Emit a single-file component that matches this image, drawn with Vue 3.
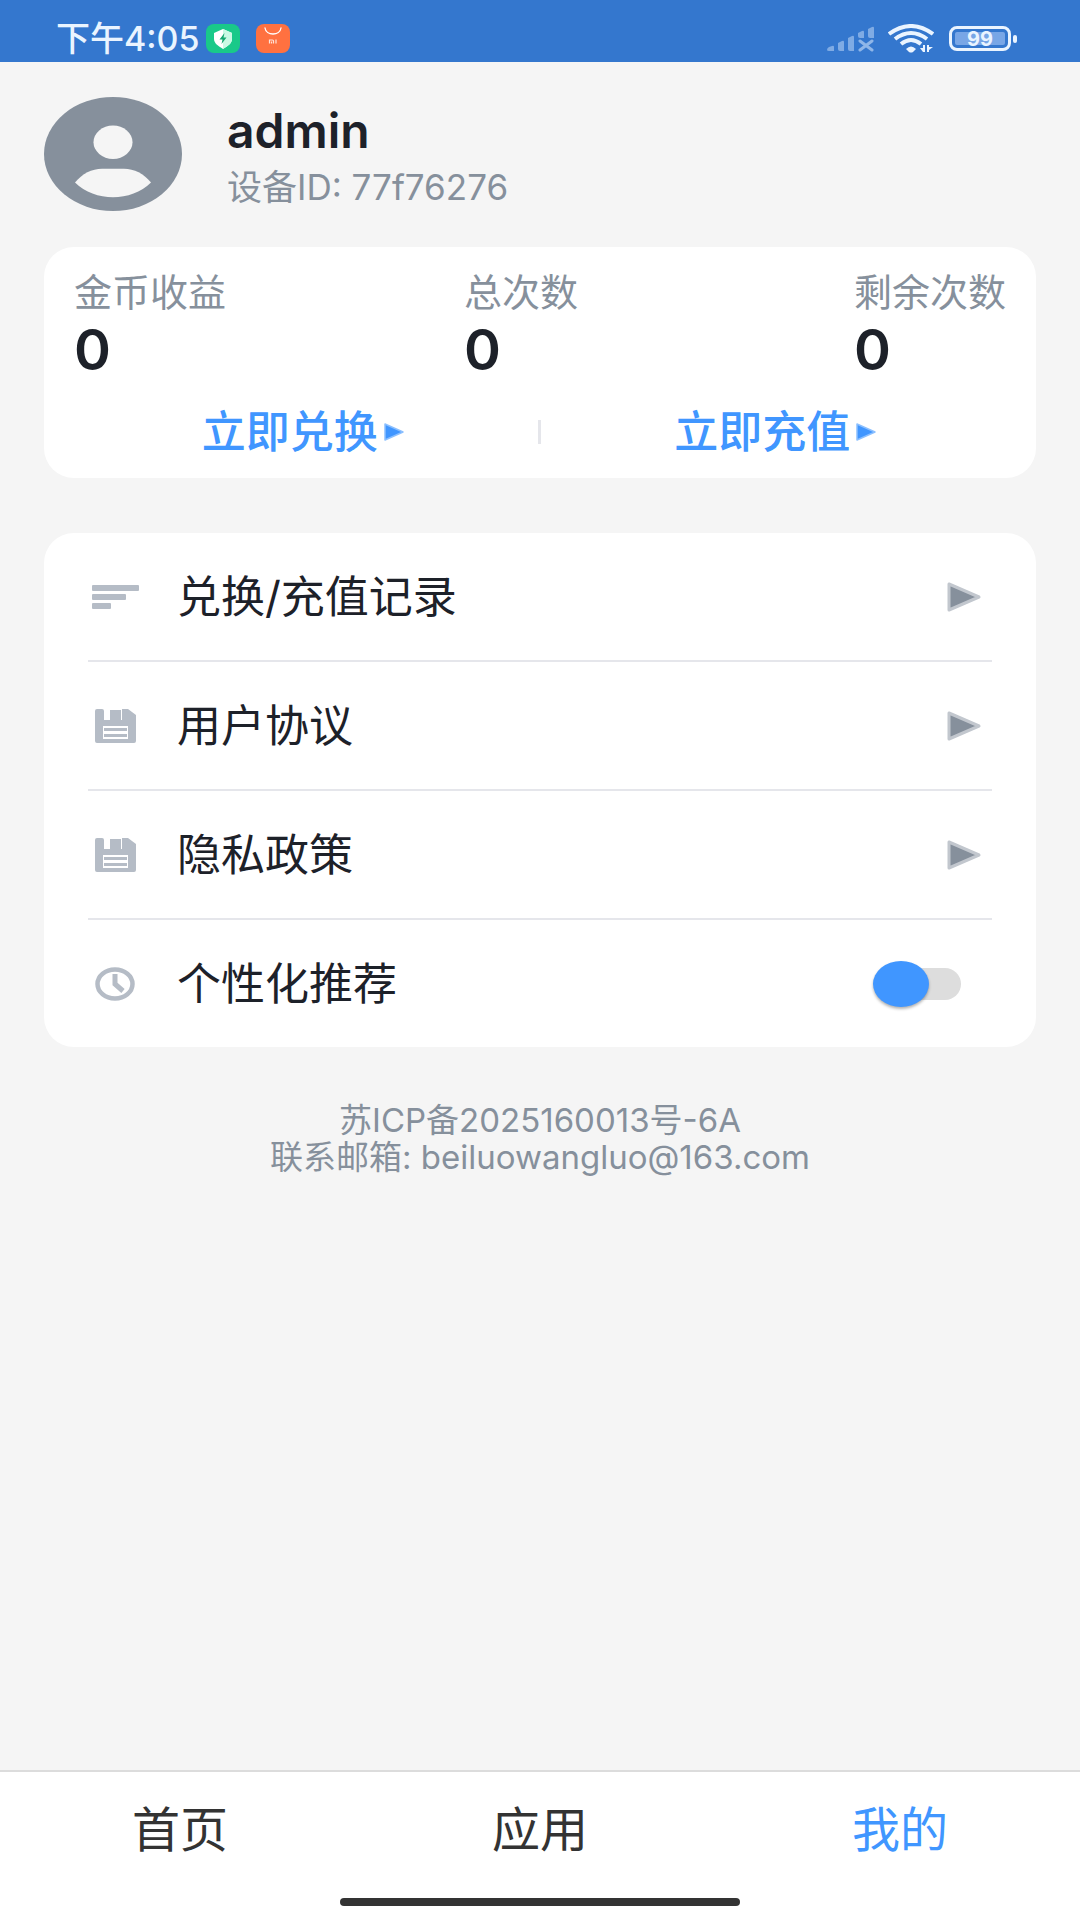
<template>
  <div class="page">
    <header class="status-bar">
      <div class="status-left">
        <span class="status-time">下午4:05</span>
        <svg class="app-icon" viewBox="0 0 34 29" preserveAspectRatio="none">
          <rect width="34" height="29" rx="8" fill="#19c989" />
          <path d="M17 5 L26 9 V15 C26 19 22 22 17 25 C12 22 8 19 8 15 V9 Z" fill="#fff" />
          <path d="M17 5 L26 9 V15 C26 19 22 22 17 25 Z" fill="#c9f9e4" />
          <path d="M18.5 9 L13.5 15.5 H16.5 L15.5 20 L20.5 13.5 H17.5 Z" fill="#14a870" />
        </svg>
        <svg class="app-icon" viewBox="0 0 34 29" preserveAspectRatio="none">
          <rect width="34" height="29" rx="8" fill="#ff7140" />
          <path d="M9 4 C10 12 24 12 25 4" fill="none" stroke="#fff" stroke-width="1.3" stroke-linecap="round" />
          <path d="M13.5 19.5 V16 H16.5 Q17.5 16 17.5 17 V19.5 M15.5 17.5 V19.5 M20 15.5 V19.5" fill="none" stroke="#ffe3d8" stroke-width="1.2" />
        </svg>
      </div>
      <div class="status-right">
        <svg class="signal-icon" viewBox="0 0 48 26">
          <g fill="#7fabe4">
            <path d="M0 24 Q0 22 2 21 L5 20 Q7 19 7 21 V25 H2 Q0 25 0 24 Z" />
            <path d="M11 17 L15 15 Q17 14 17 16 V25 H13 Q11 25 11 23 Z" />
            <path d="M21 12 L25 10 Q27 9 27 11 V25 H23 Q21 25 21 23 Z" />
            <path d="M31 7 L35 5 Q37 4 37 6 V12 H33 Q31 12 31 10 Z" />
            <path d="M41 3 L45 1 Q47 0 47 2 V12 H43 Q41 12 41 10 Z" />
          </g>
          <path d="M33 15 L45 24 M45 15 L33 24" stroke="#8fb6e8" stroke-width="3" stroke-linecap="round" />
        </svg>
        <svg class="wifi-icon" viewBox="0 0 46 29">
          <g fill="none" stroke="#eaf4ff" stroke-width="4">
            <path d="M1 10 Q23 -6 45 10" />
            <path d="M7 15 Q23 3 39 15" />
            <path d="M13 20 Q23 12 33 20" />
          </g>
          <path d="M18 25 Q23 20 28 25 L25 28 Q23 29 21 28 Z" fill="#eaf4ff" />
          <path d="M37 21 V28 H35 L32 24 H35 V21 Z M39 28 V21 H41 V23 H45 L41 26 V28 Z" fill="#eaf4ff" />
        </svg>
        <span class="battery">
          <span class="battery-body"><span class="battery-level">99</span></span>
          <span class="battery-cap"></span>
        </span>
      </div>
    </header>

    <main class="content">
      <section class="profile">
        <svg class="avatar" viewBox="0 0 138 116" preserveAspectRatio="none">
          <ellipse cx="69" cy="58" rx="69" ry="58" fill="#86909c" />
          <ellipse cx="69" cy="46" rx="19.5" ry="17" fill="#f5f5f5" />
          <path d="M31 87 C38 78 48 73 58 73 H80 C90 73 100 78 107 87 C97 97 83 102 69 102 C55 102 41 97 31 87 Z" fill="#f5f5f5" />
        </svg>
        <div class="profile-info">
          <h1 class="profile-name">{{ user.name }}</h1>
          <p class="profile-id">设备ID: {{ user.deviceId }}</p>
        </div>
      </section>

      <section class="card">
        <dl class="stats">
          <div v-for="stat in stats" :key="stat.label" class="stat">
            <dt class="stat-label">{{ stat.label }}</dt>
            <dd class="stat-value">{{ stat.value }}</dd>
          </div>
        </dl>
        <div class="actions">
          <button type="button" class="action">
            立即兑换
            <svg class="action-arrow" viewBox="0 0 20 18">
              <path d="M1 1 V17 L19 9 Z" fill="#4096ff" stroke="#8cc0ff" stroke-width="1.5" stroke-linejoin="round" />
            </svg>
          </button>
          <span class="action-divider"></span>
          <button type="button" class="action">
            立即充值
            <svg class="action-arrow" viewBox="0 0 20 18">
              <path d="M1 1 V17 L19 9 Z" fill="#4096ff" stroke="#8cc0ff" stroke-width="1.5" stroke-linejoin="round" />
            </svg>
          </button>
        </div>
      </section>

      <section class="card menu">
        <a v-for="item in menu" :key="item.label" href="#" class="row">
          <svg class="row-icon" viewBox="0 0 54 42">
            <g v-if="item.icon === 'list'" fill="#b5bcc6">
              <rect x="4" y="9" width="47" height="6" rx="1" />
              <rect x="4" y="18" width="34" height="6" rx="1" />
              <rect x="4" y="27" width="19" height="6" rx="1" />
            </g>
            <g v-else fill="#b5bcc6">
              <path d="M9 4 H14 Q16 4 16 6 V15 H34 V4 H40 L48 10 V36 Q48 38 46 38 H9 Q7 38 7 36 V6 Q7 4 9 4 Z" />
              <rect x="22" y="5" width="11" height="10" />
              <path d="M15 21 H40 V34 H15 Z" fill="#fff" />
              <path d="M16 23 H39 V26 H16 Z M16 29 H39 V32 H16 Z" />
            </g>
          </svg>
          <span class="row-label">{{ item.label }}</span>
          <svg class="row-arrow" viewBox="0 0 34 30">
            <path d="M2 2 V28 L32 15 Z" fill="#86909c" stroke="#c2c7ce" stroke-width="3" stroke-linejoin="round" />
          </svg>
        </a>
        <label class="row" for="recommend">
          <svg class="row-icon" viewBox="0 0 54 42">
            <g fill="none" stroke="#b5bcc6">
              <ellipse cx="27" cy="21" rx="17.5" ry="14.5" stroke-width="4.5" />
              <path d="M27 11 V21 L35 28" stroke-width="5" />
            </g>
          </svg>
          <span class="row-label">个性化推荐</span>
          <input id="recommend" v-model="recommend" type="checkbox" class="switch" />
        </label>
      </section>

      <footer class="footer">
        <p>苏ICP备2025160013号-6A</p>
        <p>联系邮箱: beiluowangluo@163.com</p>
      </footer>
    </main>

    <nav class="tab-bar">
      <div class="tabs">
        <button
          v-for="tab in tabs"
          :key="tab"
          type="button"
          class="tab"
          :class="{ active: tab === activeTab }"
          @click="activeTab = tab"
        >
          {{ tab }}
        </button>
      </div>
      <span class="home-indicator"></span>
    </nav>
  </div>
</template>

<script setup>
import { ref } from "vue";

const user = { name: "admin", deviceId: "77f76276" };

const stats = [
  { label: "金币收益", value: 0 },
  { label: "总次数", value: 0 },
  { label: "剩余次数", value: 0 },
];

const menu = [
  { label: "兑换/充值记录", icon: "list" },
  { label: "用户协议", icon: "doc" },
  { label: "隐私政策", icon: "doc" },
];

const tabs = ["首页", "应用", "我的"];
const activeTab = ref("我的");
const recommend = ref(false);
</script>

<style>
body {
  margin: 0;
  background: #f5f5f5;
}
</style>

<style scoped>
.page {
  display: flex;
  flex-direction: column;
  min-height: 100vh;
  background: #f5f5f5;
  color: #1d2129;
  font-family: Inter, "Noto Sans CJK SC", sans-serif;
}

h1,
p,
dl,
dd {
  margin: 0;
}

button {
  padding: 0;
  border: none;
  background: none;
  font-family: inherit;
  cursor: pointer;
}

/* status bar */
.status-bar {
  display: flex;
  justify-content: space-between;
  box-sizing: border-box;
  height: 62px;
  padding: 15px 63px 0 56px;
  background: #3477ce;
  color: #eaf4ff;
}

.status-left,
.status-right {
  display: flex;
  align-items: center;
}

.status-left {
  gap: 16px;
}

.status-time {
  margin-right: -10px;
  font-size: 34px;
  font-weight: 500;
  line-height: 46px;
}

.app-icon {
  width: 34px;
  height: 29px;
}

.signal-icon {
  width: 48px;
  height: 26px;
  margin-right: 13px;
}

.wifi-icon {
  width: 46px;
  height: 29px;
  margin-right: 15px;
}

.battery {
  display: flex;
  align-items: center;
  gap: 2px;
}

.battery-body {
  box-sizing: border-box;
  width: 62px;
  height: 25px;
  padding: 3px;
  border: 3px solid #eaf4ff;
  border-radius: 8px;
}

.battery-level {
  display: block;
  height: 13px;
  border-radius: 2px;
  background: #78a6e6;
  font-size: 20px;
  font-weight: 700;
  line-height: 14px;
  text-align: center;
}

.battery-cap {
  width: 4px;
  height: 8px;
  border-radius: 2px;
  background: #eaf4ff;
}

/* content */
.content {
  flex: 1;
  padding: 35px 44px;
}

.profile {
  display: flex;
  gap: 45px;
  height: 150px;
}

.avatar {
  width: 138px;
  height: 114px;
}

.profile-name {
  padding-top: 4px;
  font-size: 48px;
  font-weight: 600;
  line-height: 60px;
}

.profile-id {
  color: #86909c;
  font-size: 35px;
  line-height: 52px;
}

.card {
  border-radius: 30px;
  background: #fff;
}

.stats {
  display: grid;
  grid-template-columns: 1fr 1fr auto;
  padding: 19px 30px 0;
}

.stat-label {
  color: #86909c;
  font-size: 38px;
  line-height: 52px;
}

.stat-value {
  font-size: 56px;
  font-weight: 600;
  line-height: 64px;
}

.actions {
  display: grid;
  grid-template-columns: 1fr 3px 1fr;
  align-items: center;
  padding: 20px 26px 16px 24px;
}

.action {
  display: flex;
  align-items: center;
  justify-content: center;
  gap: 6px;
  color: #4096ff;
  font-size: 44px;
  font-weight: 500;
  line-height: 60px;
}

.action-arrow {
  width: 20px;
  height: 18px;
}

.action-divider {
  height: 24px;
  background: #e5e6eb;
}

.menu {
  margin-top: 55px;
  padding: 0 44px;
}

.row {
  display: flex;
  align-items: center;
  height: 127px;
  color: inherit;
  text-decoration: none;
}

.row + .row {
  border-top: 2px solid #e5e6eb;
}

.row-icon {
  width: 54px;
  height: 42px;
  margin-right: 35px;
}

.row-label {
  flex: 1;
  font-size: 44px;
  line-height: 60px;
}

.row-arrow {
  width: 34px;
  height: 30px;
  margin-right: 11px;
}

.switch {
  position: relative;
  width: 88px;
  height: 46px;
  margin: 0 31px 0 0;
  appearance: none;
  cursor: pointer;
}

.switch::before {
  position: absolute;
  inset: 7px 0 7px 6px;
  border-radius: 16px;
  background: #dddddd;
  content: "";
}

.switch::after {
  position: absolute;
  top: 0;
  left: 0;
  width: 56px;
  height: 46px;
  border-radius: 50%;
  background: #4096ff;
  box-shadow: 0 2px 3px rgba(0, 0, 0, 0.3);
  content: "";
}

.switch:checked::after {
  right: 0;
  left: auto;
}

.footer {
  padding-top: 55px;
  color: #86909c;
  font-size: 33px;
  line-height: 37px;
  text-align: center;
}

/* bottom tabs */
.tab-bar {
  display: flex;
  flex-direction: column;
  align-items: center;
  border-top: 2px solid #dcdcdc;
  background: #fff;
}

.tabs {
  display: grid;
  grid-template-columns: repeat(3, 1fr);
  width: 100%;
}

.tab {
  height: 116px;
  color: #333;
  font-size: 48px;
  line-height: 60px;
}

.tab.active {
  color: #4096ff;
}

.home-indicator {
  width: 37%;
  height: 8px;
  margin: 10px 0 14px;
  border-radius: 4px;
  background: #333;
}
</style>
